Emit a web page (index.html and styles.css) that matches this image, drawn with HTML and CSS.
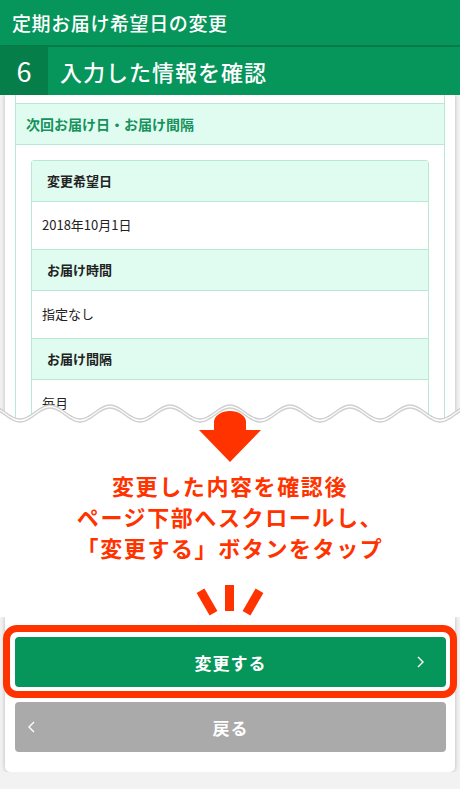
FILE: index.html
```html
<!DOCTYPE html>
<html lang="ja">
<head>
  <meta charset="UTF-8">
  <title>定期お届け希望日の変更</title>
  <link rel="stylesheet" href="styles.css">
</head>
<body>
  <header class="page-head">
    <h1 class="page-title">定期お届け希望日の変更</h1>
    <div class="step">
      <span class="step-num">6</span>
      <h2 class="step-title">入力した情報を確認</h2>
    </div>
  </header>

  <div class="shot shot-top">
    <div class="card card-top">
      <div class="box">
        <div class="box-cut"></div>
        <div class="box-head">次回お届け日・お届け間隔</div>
        <div class="box-body">
          <dl class="detail">
            <dt>変更希望日</dt>
            <dd>2018年10月1日</dd>
            <dt>お届け時間</dt>
            <dd>指定なし</dd>
            <dt>お届け間隔</dt>
            <dd>毎月</dd>
          </dl>
        </div>
      </div>
    </div>
  </div>

  <section class="note">
    <svg class="wave" width="460" height="32" viewBox="0 0 460 32">
      <path d="M-10 8 C2 8 8 22 20 22 S38 8 50 8 S68 22 80 22 S98 8 110 8 S128 22 140 22 S158 8 170 8 S188 22 200 22 S218 8 230 8 S248 22 260 22 S278 8 290 8 S308 22 320 22 S338 8 350 8 S368 22 380 22 S398 8 410 8 S428 22 440 22 S458 8 470 8 L470 32 L-10 32 Z" fill="#fff"/>
      <path d="M-10 8 C2 8 8 22 20 22 S38 8 50 8 S68 22 80 22 S98 8 110 8 S128 22 140 22 S158 8 170 8 S188 22 200 22 S218 8 230 8 S248 22 260 22 S278 8 290 8 S308 22 320 22 S338 8 350 8 S368 22 380 22 S398 8 410 8 S428 22 440 22 S458 8 470 8" fill="none" stroke="#cfcfcf" stroke-width="1.5"/>
      <path d="M-10 11 C2 11 8 25 20 25 S38 11 50 11 S68 25 80 25 S98 11 110 11 S128 25 140 25 S158 11 170 11 S188 25 200 25 S218 11 230 11 S248 25 260 25 S278 11 290 11 S308 25 320 25 S338 11 350 11 S368 25 380 25 S398 11 410 11 S428 25 440 25 S458 11 470 11" fill="none" stroke="#cfcfcf" stroke-width="1.5"/>
    </svg>
    <svg class="arrow" width="62" height="52" viewBox="0 0 62 52">
      <path d="M15 12 A16 11 0 0 1 47 12 L47 20 L62 20 L31 52 L0 20 L15 20 Z" fill="#ff3300"/>
    </svg>
    <p class="note-text">変更した内容を確認後<br>ページ下部へスクロールし、<br>「変更する」ボタンをタップ</p>
    <svg class="burst" width="82" height="34" viewBox="0 0 82 34">
      <rect x="36" y="2" width="9" height="26" fill="#ff3300"/>
      <g transform="translate(18 19) rotate(-30)"><rect x="-4.5" y="-13" width="9" height="26" fill="#ff3300"/></g>
      <g transform="translate(64 19) rotate(30)"><rect x="-4.5" y="-13" width="9" height="26" fill="#ff3300"/></g>
    </svg>
  </section>

  <div class="shot shot-bottom">
    <div class="card card-bottom">
      <div class="focus">
        <a class="btn btn-go" href="#">
          <span></span>
          <span class="btn-label">変更する</span>
          <svg class="chev chev-right" width="7" height="12" viewBox="0 0 7 12"><path d="M1 1 L6 6 L1 11" fill="none" stroke="#fff" stroke-width="1.4"/></svg>
        </a>
      </div>
      <a class="btn btn-back" href="#">
        <svg class="chev chev-left" width="7" height="12" viewBox="0 0 7 12"><path d="M6 1 L1 6 L6 11" fill="none" stroke="#fff" stroke-width="1.4"/></svg>
        <span class="btn-label">戻る</span>
        <span></span>
      </a>
    </div>
  </div>
</body>
</html>
```

FILE: styles.css
```css
/* base */
body {
  margin: 0;
  background-color: #f2f2f2;
  font-family: "Noto Sans CJK JP", "Noto Sans", sans-serif;
  color: #222;
}

/* header */
.page-head {
  background-color: #06955a;
  color: white;
}

.page-title {
  margin: 0;
  height: 45px;
  padding-left: 12px;
  font-size: 19px;
  font-weight: 500;
  letter-spacing: 0.6px;
  line-height: 45px;
  border-bottom: 2px solid #057c48;
}

.step {
  display: flex;
  height: 48px;
}

.step-num {
  width: 48px;
  background-color: #067e4a;
  font-size: 27px;
  line-height: 48px;
  text-align: center;
}

.step-title {
  margin: 0;
  padding-left: 12px;
  font-size: 22px;
  font-weight: 500;
  letter-spacing: 1px;
  line-height: 48px;
}

/* screenshot parts */
.shot-top {
  height: 330px;
  overflow: hidden;
}

.card {
  margin: 0 5px;
  background-color: white;
  box-shadow: 0 0 4px rgba(0, 0, 0, 0.25);
}

.card-top {
  padding: 0 10px;
  height: 400px;
}

.box {
  border-left: 1px solid #b9e8d6;
  border-right: 1px solid #b9e8d6;
  height: 100%;
}

.box-cut {
  height: 8px;
}

.box-head {
  background-color: #e0fcf0;
  border-top: 1px solid #b9e8d6;
  border-bottom: 1px solid #b9e8d6;
  padding: 11px 10px;
  font-size: 14px;
  line-height: 18px;
  font-weight: bold;
  color: #16925c;
}

.box-body {
  padding: 15px 15px 0;
}

.detail {
  margin: 0;
  border: 1px solid #b9e8d6;
  border-radius: 3px 3px 0 0;
}

.detail dt {
  background-color: #e0fcf0;
  padding: 12px 15px;
  font-size: 13px;
  line-height: 16px;
  font-weight: bold;
  border-bottom: 1px solid #b9e8d6;
}

.detail dd {
  margin: 0;
  padding: 15px 10px 16px;
  font-size: 13px;
  line-height: 16px;
  border-bottom: 1px solid #b9e8d6;
}

/* annotation */
.note {
  display: flow-root;
  position: relative;
  background-color: white;
  text-align: center;
}

.wave {
  position: absolute;
  top: -28px;
  left: 0;
}

.arrow {
  position: relative;
  display: block;
  margin: -15px auto 0;
}

.note-text {
  margin: 8px 0 0;
  font-size: 22px;
  line-height: 31px;
  font-weight: bold;
  letter-spacing: 1.6px;
  color: #ff3300;
}

.burst {
  display: block;
  margin: 20px auto 0;
}

/* buttons */
.card-bottom {
  padding: 8px 9px 20px 10px;
  border-radius: 0 0 5px 5px;
}

.focus {
  margin: 0 -11px 0 -12px;
  padding: 5px 4px 4px 5px;
  border: 7px solid #ff3300;
  border-radius: 14px;
}

.btn {
  display: grid;
  grid-template-columns: 1fr auto 1fr;
  align-items: center;
  height: 50px;
  border-radius: 4px;
  color: white;
  text-decoration: none;
  font-size: 17px;
  font-weight: bold;
  letter-spacing: 1px;
}

.btn-go {
  background-color: #06955a;
}

.btn-back {
  margin-top: 4px;
  background-color: #aaaaaa;
}

.chev-right {
  justify-self: end;
  margin-right: 22px;
}

.chev-left {
  justify-self: start;
  margin-left: 13px;
}
```
